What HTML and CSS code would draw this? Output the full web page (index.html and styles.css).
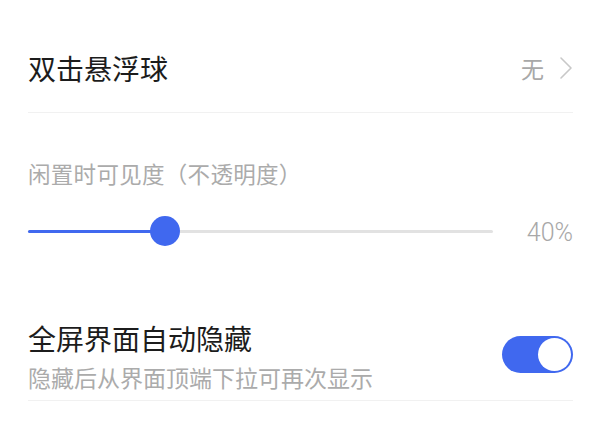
FILE: index.html
```html
<!DOCTYPE html>
<html lang="zh-CN">
<head>
<meta charset="utf-8">
<link rel="stylesheet" href="styles.css">
</head>
<body>
<div class="page">
  <div class="row nav-row">
    <div class="title">双击悬浮球</div>
    <div class="value">
      <span class="value-text">无</span>
      <svg class="chevron" width="14" height="24" viewBox="0 0 14 24">
        <polyline points="2,2 12,12 2,22" fill="none" stroke="#c8c8c8" stroke-width="1.6" stroke-linecap="round" stroke-linejoin="round"/>
      </svg>
    </div>
  </div>

  <div class="slider-block">
    <div class="label">闲置时可见度（不透明度）</div>
    <div class="slider-row">
      <div class="track">
        <div class="fill" style="width: 29.5%"><span class="thumb"></span></div>
      </div>
      <div class="percent">40%</div>
    </div>
  </div>

  <div class="row toggle-row">
    <div class="texts">
      <div class="title">全屏界面自动隐藏</div>
      <div class="sub">隐藏后从界面顶端下拉可再次显示</div>
    </div>
    <div class="switch"><span class="knob"></span></div>
  </div>
</div>
</body>
</html>
```
FILE: styles.css
```css
* { box-sizing: border-box; }
html, body { margin: 0; padding: 0; background: #ffffff; }
body {
  font-family: "Noto Sans CJK SC", "Noto Sans", sans-serif;
  color: #1c1c1c;
}
.page {
  padding: 0 27px 0 28px;
  width: 600px;
}
.row {
  display: flex;
  align-items: center;
  justify-content: space-between;
  border-bottom: 1px solid #f1f1f1;
}
.nav-row {
  padding: 50px 0 26px;
  height: 113px;
}
.title {
  font-size: 28px;
  line-height: 36px;
  color: #1c1c1c;
}
.value {
  display: flex;
  align-items: center;
  gap: 15px;
}
.value-text {
  font-size: 23px;
  line-height: 36px;
  color: #a8a8a8;
}
.chevron { display: block; }

.slider-block {
  padding-top: 45px;
}
.label {
  font-size: 22.5px;
  line-height: 30px;
  color: #ababab;
  letter-spacing: 0.3px;
}
.slider-row {
  margin-top: 28px;
  display: flex;
  align-items: center;
  height: 30px;
}
.track {
  width: 465px;
  height: 3px;
  background: #e2e2e2;
  border-radius: 2px;
  position: relative;
}
.fill {
  height: 3px;
  background: #4068ef;
  border-radius: 2px;
  position: relative;
}
.thumb {
  position: absolute;
  right: -15px;
  top: -13.5px;
  width: 30px;
  height: 30px;
  border-radius: 50%;
  background: #4068ef;
}
.percent {
  flex: 1;
  text-align: right;
  font-family: "Roboto", "Noto Sans", sans-serif;
  font-weight: 300;
  font-size: 25px;
  color: #a8a8a8;
  padding-top: 3px;
}

.toggle-row {
  margin-top: 74px;
  padding-bottom: 8px;
}
.texts {
  display: flex;
  flex-direction: column;
  gap: 6px;
}
.sub {
  font-size: 23px;
  line-height: 30px;
  color: #ababab;
}
.switch {
  width: 71px;
  height: 37px;
  border-radius: 19px;
  background: #4068ef;
  display: flex;
  align-items: center;
  justify-content: flex-end;
  padding: 0 2px;
  margin-bottom: 4px;
}
.knob {
  width: 33px;
  height: 33px;
  border-radius: 50%;
  background: #ffffff;
}
```
